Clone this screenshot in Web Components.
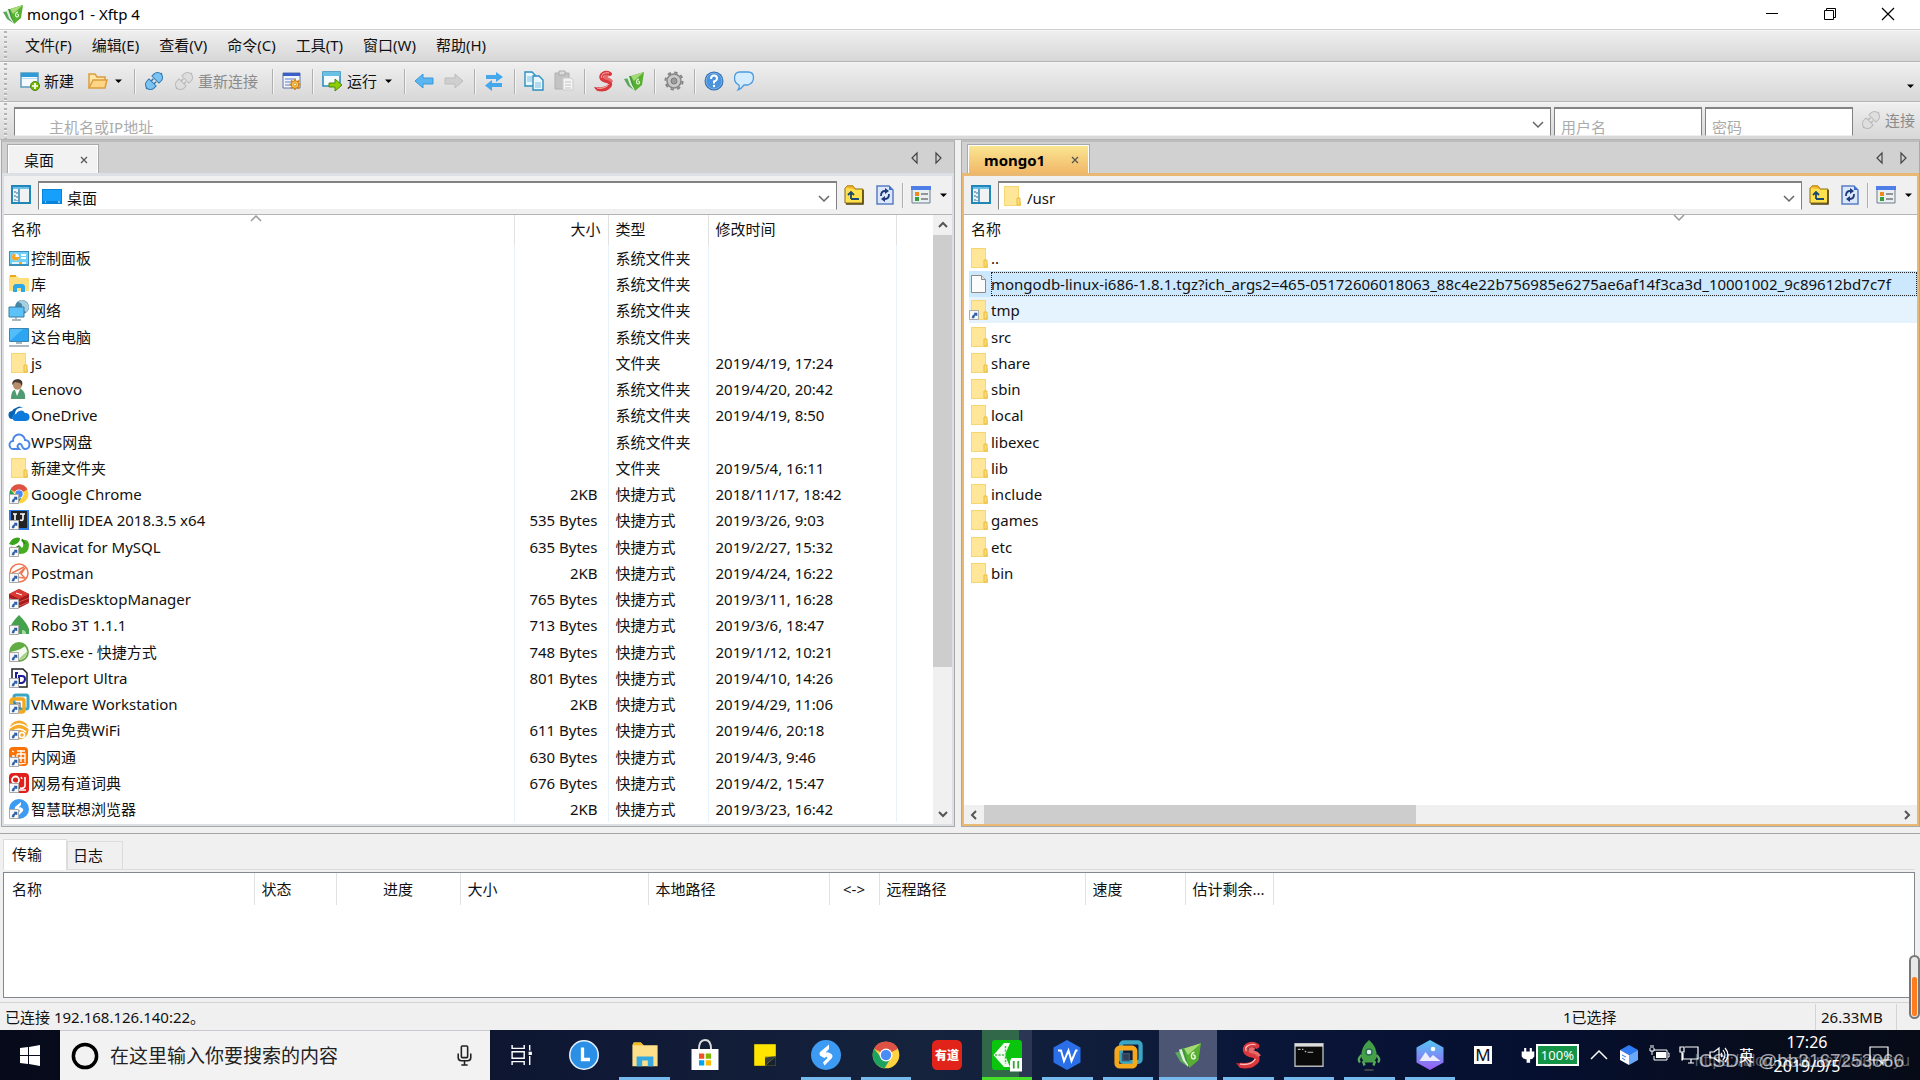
<!DOCTYPE html>
<html lang="zh-CN">
<head>
<meta charset="utf-8">
<title>mongo1 - Xftp 4</title>
<style>
html, body { margin: 0; height: 100%; }
body { font: 15px/20px "Noto Sans", "Noto Sans CJK SC", sans-serif; color: #111; background: #f0f0f0; overflow: hidden; }
</style>
</head>
<body>
<xftp-app></xftp-app>
<script>
const folder = '<path d="M2 0h15v15l2 1v4H2z" fill="#f7d672"/><path d="M3 1h13v18H3z" fill="#ffe698"/><path d="M15 12h3v7h-3z" fill="#ffdc70" stroke="#e6bd42"/>';
const plug = (a, b) => `<g transform="rotate(-45 10 10)"><path d="M-1 10h3M18 10h3" stroke="${b}" stroke-width="2"/><path d="M8 5H5a5 5 0 0 0 0 10h3zM12 5h3a5 5 0 0 1 0 10h-3z" fill="${a}" stroke="${b}"/><path d="M8 8h3M8 12h3" stroke="${b}" stroke-width="1.5"/></g>`;
const xftp = '<path d="M0 8l4 7 6 4-4-12z" fill="#5aa85e"/><path d="M3 6l3 8 4 5 1-3-4-11z" fill="#dff0da"/><path d="M5 5l3 9 3 5 2-2-5-12z" fill="#3f9440"/><path d="M7 5l13-4-2 13-7 6-2-7z" fill="#58b031"/><path d="M7 5l13-4-10 9z" fill="#a6d977"/><path d="M15 8c-3 0-3 5-1 5s2-3 0-3" fill="none" stroke="#e9ffe0" stroke-width="1.100"/>';
const xshell = '<path d="M0 16c7 2 12 1 13-2 3 3 2 5-2 6-5 1-9 0-11-4z" fill="#c7262c"/><path d="M16 3C11 0 5 4 8 8c2 3 7 1 8 4 1 4-5 7-12 6" fill="none" stroke="#d9383d" stroke-width="4" stroke-linecap="round"/><path d="M14 6c-2-2-4 0-3 1s5 0 7 4" fill="none" stroke="#e8696a" stroke-width="2.500"/><path d="M15 2C10 1 6 4 8 7M3 17c6 1 10-1 12-4" fill="none" stroke="#ffb8b4"/>';
const chrome = '<circle cx="10" cy="10" r="9.5" fill="#ffd242"/><path d="M10 10L1.5 5.5A9.6 9.6 0 0 1 18.5 5.5z" fill="#de5145"/><path d="M1.5 5.5A9.6 9.6 0 0 0 9 19.5L13.5 12 10 10 6 11z" fill="#1da260"/><circle cx="10" cy="10" r="4.6" fill="#fff"/><circle cx="10" cy="10" r="3.7" fill="#4a8bf5"/>';
const vmware = '<rect x="5" y="1" width="14" height="14" rx="2" fill="none" stroke="#3aa6c4" stroke-width="3"/><rect x="2" y="5" width="13" height="13" rx="2" fill="none" stroke="#f5a81c" stroke-width="3.4"/><rect x="6" y="9" width="5" height="5" fill="#fff" fill-opacity=".15" stroke="#37556b"/>';
const bird = '<circle cx="10" cy="10" r="10" fill="#3e9bf4"/><path d="M12 3L6 8q-1 2 1 3l2 1 3-2-2-2 2-2zM9 17l5-5q1-2-1-3l-2-1-1 2 1 2-3 3z" fill="#fff"/>';
const ICONS = {
 xftp, xshell, chrome, vmware, bird, folder,
 newwin: '<path d="M1 2h17v14H1z" fill="#f4fafd" stroke="#5a9dbd" stroke-width="1.5"/><path d="M1 2h17v4H1z" fill="#2e9bd6"/><path d="M2 7h15v1H2z" fill="#bcdff0"/><circle cx="15" cy="15" r="4.5" fill="#7ab800" stroke="#4d8a08"/><path d="M15 12v6M12 15h6" stroke="#fff" stroke-width="1.7"/>',
 open: '<path d="M1 17V3h6l2 3h8v3" fill="#ffe7a5" stroke="#dc9d3f" stroke-width="1.5"/><path d="M1 17l4-8h14l-2 8z" fill="#ffd482" stroke="#dc9d3f" stroke-width="1.5"/>',
 plug: plug('#7cc3f2', '#2f79b5'), plugoff: plug('#dedede', '#b9b9b9'),
 props: '<path d="M1 2h17v15H1z" fill="#f3f5fb" stroke="#5a74a8"/><path d="M1 2h17v3H1z" fill="#3a5fc8"/><path d="M3 8h11M3 11h7M3 14h6" stroke="#5b7fd0"/><path d="M13 8v11M7.500 13.500h11M9 9.500l8 8M17 9.500l-8 8" stroke="#d58b1b" stroke-width="1.800"/><circle cx="13" cy="13.500" r="3.800" fill="#ffc24e" stroke="#c77d12"/><circle cx="13" cy="13.500" r="1.400" fill="#fff" stroke="#c77d12" stroke-width=".8"/>',
 run: '<path d="M1 1h17v14H1z" fill="#f4fafd" stroke="#2f8fbd" stroke-width="1.6"/><path d="M1 1h17v4H1z" fill="#69bfe4"/><path d="M7 12h6V8l7 6-7 6v-4H7z" fill="#8fce00" stroke="#4d8a08"/>',
 left: '<path d="M1 10l8-7v4h10v6H9v4z" fill="#5bb5f0" stroke="#3b98dc"/>',
 right: '<path d="M19 10l-8-7v4H1v6h10v4z" fill="#cfcfcf" stroke="#bdbdbd"/>',
 sync: '<path d="M2 4h10V1l7 5-7 5V8H2zM18 12H8V9l-7 5.500L8 20v-4h10z" fill="#45a8ec"/>',
 copy: '<path d="M1 1h7l3 3v11H1z" fill="#eaf7fd" stroke="#2b8fbf" stroke-width="1.4"/><path d="M9 5h6l4 4v10H9z" fill="#eaf7fd" stroke="#2b8fbf" stroke-width="1.4"/><path d="M3 6h5M3 8h5M3 10h5M11 12h6M11 14h6M11 16h6" stroke="#7bbfe0"/>',
 paste: '<path d="M1 2h14v16H1z" fill="#c3c3c3" stroke="#b0b0b0"/><path d="M5 0h6v4H5z" fill="#dcdcdc" stroke="#aaa"/><path d="M9 7h8l2 2v10H9z" fill="#f4f4f4" stroke="#ccc"/><path d="M11 11h6M11 14h6M11 17h6" stroke="#c4c4c4"/>',
 gear: '<circle cx="10" cy="10" r="7" fill="#c9c9c9" stroke="#858585" stroke-width="1.5"/><circle cx="10" cy="10" r="8.600" fill="none" stroke="#858585" stroke-width="2" stroke-dasharray="3.400 3.350"/><circle cx="10" cy="10" r="3" fill="#9b9b9b" stroke="#7c7c7c"/>',
 help: '<circle cx="10" cy="10" r="9.500" fill="#2f6fb8"/><circle cx="10" cy="10" r="8" fill="#4b93da" stroke="#a9cdf0" stroke-width=".6"/><path d="M7 8q0-3.500 3-3.500T13 7.500q0 2-3 3v2" fill="none" stroke="#fff" stroke-width="2"/><circle cx="10" cy="15" r="1.200" fill="#fff"/>',
 chat: '<path d="M6 1h8q5.500 0 5.500 5.500T14 14h-4q-3 4-6 5 2-3 1-5Q.500 12 .500 7 .500 1 6 1z" fill="#d4ecff" stroke="#4b9ade" stroke-width="1.300"/>',
 side: '<path d="M1 1h18v17H1z" fill="#f2f2f2" stroke="#2187b9" stroke-width="2"/><path d="M2 2h16v2H2z" fill="#6cc0ea"/><path d="M8 4v14" stroke="#2187b9" stroke-width="1.500"/><path d="M4 6v11M6 7v9" stroke="#346e9c" stroke-dasharray="2 2"/>',
 desktop: '<path d="M0 3h20v15H0z" fill="#0a84d8"/><path d="M1 4h18v11H1z" fill="#17a0fb"/><path d="M3 16h1M16 16h2" stroke="#fff"/>',
 up: '<path d="M1 18V3l2-2h6l2 3h8v14z" fill="#ffe04f" stroke="#8a6c11"/><path d="M1 3l2-2h6l2 3" fill="#f3b92c" stroke="#c98a14"/><path d="M19 5v14H2" fill="none" stroke="#4f420b" stroke-width="1.500"/><path d="M7 14V8M4 10l3-3 3 3M7 14h8" fill="none" stroke="#1a4970" stroke-width="1.800"/>',
 refresh: '<path d="M2 1h12l4 4v14H2z" fill="#dbe8fb" stroke="#5b7cc2" stroke-width="1.500"/><path d="M14 1v4h4" fill="#3a70d8"/><path d="M6 11q0-5 4-5M14 9q0 5-4 5" fill="none" stroke="#1e3a7a" stroke-width="1.800"/><path d="M10 3l4 3-4 3zM10 11l-4 3 4 3z" fill="#1e3a7a"/>',
 view: '<path d="M1 2h18v16H1z" fill="#e8eef2" stroke="#6d7f8c"/><path d="M0 1h20v4H0z" fill="#4f7fe6"/><path d="M4 7h4v4H4z" fill="#f08a1d"/><path d="M4 12h4v4H4z" fill="#35a03b"/><path d="M10 9h7M10 14h7" stroke="#777" stroke-width="1.500"/>',
 cpanel: '<path d="M0 3h20v15H0z" fill="#3b8fb9"/><path d="M1 4h18v12H1z" fill="#6fd0fb"/><circle cx="6.500" cy="9" r="3.600" fill="#fff"/><path d="M6.500 9V5.400a3.600 3.600 0 1 0 3.600 3.600z" fill="#f5a623"/><path d="M12 6h5v2h-5zM12 9h5v2h-5z" fill="#fff"/><path d="M3 15h7M13 15h4" stroke="#fff" stroke-width="1.500"/><path d="M10 15h3" stroke="#f5a623" stroke-width="2"/>',
 lib: '<path d="M0 2h8l2 2h10v13H0z" fill="#ffdf7d"/><path d="M1 2h6" stroke="#e8a91d" stroke-width="2"/><path d="M4 18v-6l2-2h8l2 2v6h-4v-4H8v4z" fill="#2ea7e6"/>',
 net: '<circle cx="13" cy="7" r="7" fill="#4486a8"/><path d="M9 2q5 1 4 5t5 5l2-5q-1-6-8-7z" fill="#a8cfe0"/><path d="M0 7h15v10H0z" fill="#5bc3fa" stroke="#3a7d9f"/><path d="M7 17v2M3 20h9" stroke="#8ba0ac" stroke-width="1.500"/>',
 pc: '<path d="M.500 1.500h19v13h-19z" fill="#52bdfb" stroke="#3a86b0"/><path d="M1 14L14 2h5v12z" fill="#2ea5f0"/><path d="M7 16h6" stroke="#a9b9c4" stroke-width="2"/><path d="M0 19h20" stroke="#8fa2b0" stroke-width="1.500"/>',
 user: '<path d="M2 20q0-7 3-9l7-1q5 3 4 10z" fill="#4f9c73"/><path d="M6 11l2 6 3-7z" fill="#fff"/><circle cx="8.500" cy="6" r="4.600" fill="#b98c6a"/><path d="M3 6q0-6 6-6 6 1 4 7l-2-3-5-1z" fill="#463a33"/>',
 onedrive: '<path d="M4 14a4 4 0 0 1-1-8 5 5 0 0 1 4-3q3-3 7 0a6 6 0 0 0-8 6q-3 1-2 5z" fill="#0763b5"/><path d="M7 16a3.500 3.500 0 0 1 0-7 5 5 0 0 1 9-1 4 4 0 0 1 1 8z" fill="#0d7bdc"/>',
 wps: '<path d="M5 17a4 4 0 0 1-1-8 6 6 0 0 1 12-1 4.500 4.500 0 0 1 0 9q-2 0-3-3-1-3-3-2-3 2 0 5z" fill="none" stroke="#4a86e8" stroke-width="2"/>',
 idea: '<path d="M0 0h20v20H0z" fill="#2d7be5"/><path d="M2 1h16v17H2z" fill="#222"/><path d="M4 4h4M6 4v6M11 4h5M14 4v5q0 2-3 1" stroke="#fff" stroke-width="1.600" fill="none"/>',
 navicat: '<path d="M0 7q4-8 11-6 0 4-4 6-3 2-7 0z" fill="#3aa51c"/><path d="M12 3q8-1 8 5 0 9-9 9l-6-3q1-4 5-6l3 3q2-2 1-5z" fill="#45ad22"/><path d="M13 2l3 5M2 10q4 2 8-1" stroke="#2c7d18" stroke-width="1.300" fill="none"/>',
 postman: '<circle cx="10" cy="10" r="9" fill="#fff" stroke="#ee7650" stroke-width="1.500"/><path d="M3 10L15 4M6 14L16 5l-4 6 4 4z" fill="none" stroke="#ee7650" stroke-width="1.500"/>',
 redis: '<path d="M0 5l10-5 10 5v9l-10 5-10-5z" fill="#a51c1c"/><path d="M0 5l10-5 10 5-10 5z" fill="#db3a34"/><path d="M0 9l10 4 10-4M0 13l10 4 10-4" stroke="#e0554f" fill="none"/><path d="M7 4l6 2" stroke="#fff"/>',
 robo: '<path d="M10 0q8 8 10 14v5H0v-5q3-7 10-14z" fill="#45a24c"/><path d="M13 19v-4q4 0 4 4" fill="#a8dba8"/>',
 sts: '<circle cx="10" cy="10" r="9" fill="#f6fbf2" stroke="#68a744" stroke-width="1.800"/><path d="M1 10Q2 2 9 1q6 0 8 2-4 5-16 7z" fill="#62ad43"/><path d="M19 9q-3 9-10 9 4-5 10-9z" fill="#a8d08d"/>',
 teleport: '<path d="M3 1h11l4 4v14H3z" fill="#fff" stroke="#222" stroke-width="1.500"/><path d="M6 5h3M7 4v8M10 8h3q3 0 3 3t-3 4h-3z" stroke="#1f1f9a" stroke-width="2" fill="none"/>',
 wifi: '<circle cx="10" cy="10" r="9.500" fill="#f7a928"/><path d="M1 8q9-8 18 0M3 12q7-6 14 0" fill="none" stroke="#fff" stroke-width="1.500"/><circle cx="13" cy="15" r="2.500" fill="none" stroke="#fff" stroke-width="1.500"/>',
 tong: '<rect width="19" height="19" rx="4" fill="#fb7204"/><path d="M3 4l2 1M3 9h2v5M8 4h8M12 3v12M8 7h8v8M8 7v8M8 11h8M4 15q6 3 13 1" fill="none" stroke="#fff" stroke-width="1.300"/>',
 youdao: '<rect width="20" height="20" rx="4" fill="#e0201b"/><circle cx="6.500" cy="7" r="3.500" fill="none" stroke="#fff" stroke-width="1.800"/><path d="M12 4l1 2M16 4v9q-1 3-5 2M7 17h10" stroke="#fff" stroke-width="1.600" fill="none"/>',
 file: '<path d="M2.500 1.500h10l4 4v13h-14z" fill="#fbfbfb" stroke="#8b8b8b"/><path d="M12.500 1.500v4h4" fill="#e6e6e6" stroke="#8b8b8b"/>',
 win: '<path d="M0 3l8-1v8H0zM9 2l11-2v10H9zM0 11h8v8l-8-1zM9 11h11v10L9 19z" fill="#fff"/>',
 cortana: '<circle cx="10" cy="10" r="8.300" fill="none" stroke="#000" stroke-width="2.500"/>',
 mic: '<rect x="7" y="1" width="6" height="11" rx="1" fill="none" stroke="#222" stroke-width="1.500"/><path d="M4 8v4q0 3 3 3h6q3 0 3-3V8M10 15v4M7 19h6" fill="none" stroke="#222" stroke-width="1.500"/>',
 tasks: '<path d="M1 1v3h11V1M1 19v-3h11v3M1 7h11v6H1zM17 1v5M17 11v8" fill="none" stroke="#fff" stroke-width="1.300"/><path d="M16 7h3v3h-3z" fill="#fff"/>',
 clock: '<circle cx="10" cy="10" r="9.500" fill="#2b8fe6" stroke="#e6f2fd"/><path d="M9 5v8h5" fill="none" stroke="#fff" stroke-width="2.200"/>',
 explorer: '<path d="M1 3l1-2h5l2 2h10v15H1z" fill="#ffe08a"/><path d="M1 3l1-2h5l2 2" fill="#f5b91f"/><path d="M4 18v-7h12v7h-4v-4H8v4z" fill="#36a9e1"/>',
 store: '<path d="M1 6h18v14H1z" fill="#fff"/><path d="M6 6q0-6 4-6t4 6" fill="none" stroke="#ddd" stroke-width="1.300"/><path d="M6 9h3.500v3.500H6z" fill="#f25022"/><path d="M10.500 9H14v3.500h-3.500z" fill="#7fba00"/><path d="M6 13.500h3.500V17H6z" fill="#00a4ef"/><path d="M10.500 13.500H14V17h-3.500z" fill="#ffb900"/>',
 note: '<path d="M1 1h18v18H1z" fill="#ffe400"/><path d="M10 19v-8h9v8z" fill="#17222f"/><path d="M10 19v-8h9z" fill="#2d333a"/><path d="M10 11h9l-9 8z" fill="#ffe400"/><path d="M10 19v-7l9-1z" fill="#333a40"/>',
 youdao2: '<rect width="20" height="20" rx="3.500" fill="#e2231a"/><text x="10" y="13" text-anchor="middle" font-size="8" font-weight="900" font-family="Noto Sans CJK SC" fill="#fff">有道</text>',
 green: '<rect width="20" height="20" rx="2" fill="#0ac40e"/><path d="M1 10l7-8h4L9 9v2l3 7H8z" fill="#f2fff0"/><path d="M2 10h7M9 4v5M9 11v5" stroke="#58b858" stroke-dasharray="1.500 .8"/><path d="M12 14l1-2h7v9h-8z" fill="#fff"/><path d="M14.500 14v5M17.500 14v5" stroke="#3aa33a" stroke-width="1.200"/>',
 wpsw: '<path d="M10 0l9 5v10l-9 5-9-5V5z" fill="#2a6fe8"/><path d="M4 7h2l2 7 3-7 2 7 3-7h1" fill="none" stroke="#fff" stroke-width="1.300"/>',
 cmd: '<path d="M0 2h20v16H0z" fill="#0a0a0a" stroke="#b7b7b7"/><path d="M0 2h20v2H0z" fill="#ddd"/><path d="M2 6h2M5 6h1M7 7l1 1M9 8h4" stroke="#bbb" stroke-width=".8"/>',
 rocket: '<path d="M10 0q6 5 5 12l-2 3H7l-2-3Q4 5 10 0z" fill="#43a047"/><circle cx="10" cy="8" r="2" fill="#dff0f0" stroke="#2c6e55"/><path d="M5 10q-3 3-1 5M15 10q3 3 1 5M6 14l1 3M14 14l-1 3" stroke="#57a85b" stroke-width="1.600" fill="none"/><path d="M7 20h6" stroke="#555"/>',
 photo: '<defs><linearGradient id="g" x2="0" y2="1"><stop stop-color="#55c6f5"/><stop offset="1" stop-color="#9a5cf3"/></linearGradient></defs><path d="M10 0l9 5v10l-9 5-9-5V5z" fill="url(#g)"/><path d="M3 14l4-6 3 4 2-2 5 4z" fill="#fff" fill-opacity=".85"/><circle cx="12" cy="6" r="1.500" fill="#fff"/>',
 chevup: '<path d="M2 14l8-8 8 8" fill="none" stroke="#fff" stroke-width="1.500"/>',
 cube: '<path d="M10 0l9 5-9 5-9-5z" fill="#2f7cf6"/><path d="M1 5l9 5v10l-9-5z" fill="#fff"/><path d="M19 5l-9 5v10l9-5z" fill="#6aa8ff"/><path d="M3 10l4 2M3 13l3 2" stroke="#2f7cf6"/>',
 battery: '<path d="M7 7h10v6H7z" fill="#fff"/><path d="M5 5h13v10H5v-4M19 8h1v4h-1M1 3v3h4V3M2 0v3M4 0v3M3 6v4" fill="none" stroke="#fff"/>',
 monitor: '<path d="M6 2h13v12H4V8M9 18h6M12 14v4M1 2h4v5H1zM3 7v8h1" fill="none" stroke="#fff" stroke-width="1.200"/>',
 speaker: '<path d="M1 7h4l5-4v14l-5-4H1zM12 8q2 2 0 4M14 5q4 5 0 10M16 3q6 7 0 14" fill="none" stroke="#fff" stroke-width="1.200"/>',
 action: '<path d="M1 2h18v13h-5v4l-4-4H1z" fill="none" stroke="#fff" stroke-width="1.200"/>',
 plugw: '<path d="M6 0v6M14 0v6" stroke="#fff" stroke-width="3"/><path d="M1 5h18v7q-2 4-6 4v5H8v-5q-5 0-7-4z" fill="#fff"/>',
 min: '<path d="M4 9.500h12" stroke="#000"/>',
 restore: '<path d="M4.500 6.500h9v9h-9zM6.500 6V4.500h9v9H14" fill="none" stroke="#000"/>',
 close: '<path d="M4 4l12 12M16 4L4 16" stroke="#000" stroke-width="1.200"/>',
 x: '<path d="M7 7l6 6M13 7l-6 6" stroke="#555" stroke-width="1.200"/>',
 down: '<path d="M7 8.500h7L10.500 12z" fill="#000"/>',
 chevdown: '<path d="M5 8l5 5 5-5" fill="none" stroke="#666" stroke-width="1.500"/>',
 prev: '<path d="M13 5v10L8 10z" fill="none" stroke="#444" stroke-width="1.200"/>',
 next: '<path d="M7 5v10l5-5z" fill="none" stroke="#444" stroke-width="1.200"/>',
 sup: '<path d="M6 12l4-4 4 4" fill="none" stroke="#555" stroke-width="2"/>',
 sdown: '<path d="M6 8l4 4 4-4" fill="none" stroke="#555" stroke-width="2"/>',
 sleft: '<path d="M12 6l-4 4 4 4" fill="none" stroke="#555" stroke-width="2"/>',
 sright: '<path d="M8 6l4 4-4 4" fill="none" stroke="#555" stroke-width="2"/>',
 asc: '<path d="M5 14l5-5 5 5" fill="none" stroke="#999" stroke-width="1.500"/>',
 desc: '<path d="M5 8l5 5 5-5" fill="none" stroke="#999" stroke-width="1.500"/>'
};
const BADGE = '<path d="M.500 10.500h9v9h-9z" fill="#f7f7f7" stroke="#a9a9a9"/><path d="M3 18q0-3 3-4l-1-1h3v3l-1-1q-2 1-2 3z" fill="#2b5fa8" stroke="#2b5fa8" stroke-width=".5"/>';

const BASE = `<style>
:host { display: block; box-sizing: border-box; }
*, *::before, *::after { box-sizing: border-box; }
button, input { font: inherit; color: inherit; background: none; border: 0; padding: 0; margin: 0; outline: 0; border-radius: 0; min-width: 0; }
button { display: flex; align-items: center; justify-content: center; white-space: nowrap; }
</style>`;
function define(tag, html) {
  customElements.define(tag, class extends HTMLElement {
    connectedCallback() {
      if (this.shadowRoot) return;
      const t = document.createElement('template');
      t.innerHTML = BASE + (typeof html === 'function' ? html(this) : html);
      this.attachShadow({ mode: 'open' }).append(t.content.cloneNode(true));
    }
  });
}
const icon = (n, s, l) => `<ui-icon name="${n}" size="${s || 20}"${l ? ' link' : ''}></ui-icon>`;

define('ui-icon', el => {
  const s = el.getAttribute('size') || 20;
  return `<style>:host { display: block; flex: none; width: ${s}px; height: ${s}px; } svg { display: block; overflow: visible; }</style>
  <svg width="${s}" height="${s}" viewBox="0 0 20 20" aria-hidden="true">${ICONS[el.getAttribute('name')]}${el.hasAttribute('link') ? BADGE : ''}</svg>`;
});

define('title-bar', `<style>
:host { display: flex; align-items: center; height: 29px; background: #fff; color: #000; padding: 0 3px 2px; font-size: 15px; }
h1 { flex: 1; margin: 0; padding-left: 4px; font: inherit; }
button { width: 58px; height: 27px; }
</style>${icon('xftp')}<h1>mongo1 - Xftp 4</h1>
<button aria-label="最小化">${icon('min')}</button><button aria-label="还原">${icon('restore')}</button><button aria-label="关闭">${icon('close')}</button>`);

define('bar-strip', `<style>
:host { display: flex; align-items: center; border-bottom: 1px solid #b4b4b4; border-top: 1px solid #f6f6f6; background: linear-gradient(#efefef, #d7d7d7); padding-left: 4px; }
.grip { width: 4px; align-self: stretch; flex: none; background: repeating-linear-gradient(#b4b4b4 0 2px, #f4f4f4 2px 3px, transparent 3px 5px) left / 3px 100% no-repeat; }
</style><span class="grip"></span><slot></slot>`);

define('menu-bar', `<style>
:host { border-top: 1px solid #cfcfcf; } bar-strip { height: 32px; } nav { display: flex; padding: 0 0 3px 7px; } button { padding: 0 10px; height: 27px; }
</style><bar-strip><nav>${['文件(F)','编辑(E)','查看(V)','命令(C)','工具(T)','窗口(W)','帮助(H)'].map(t => `<button>${t}</button>`).join('')}</nav></bar-strip>`);

define('tool-button', el => `<style>
:host { flex: none; } button { min-width: 30px; height: 30px; padding: 0 5px; } :host([off]) { color: #8b8b8b; }
.t { margin-left: 4px; margin-right: var(--end, 4px); } :host([menu]) .t { margin: 0 1px 0 5px; } :host([menu]) button { padding-right: 1px; }
</style><button aria-label="${el.getAttribute('label') || el.textContent}">${icon(el.getAttribute('icon'))}${el.textContent ? '<span class="t"><slot></slot></span>' : ''}${el.hasAttribute('menu') ? icon('down') : ''}</button>`);
define('tool-sep', `<style>:host { width: 1px; height: 25px; margin: 0 4px 0 5px; background: #b0b0b0; box-shadow: 1px 0 #f5f5f5; flex: none; }</style>`);

define('tool-bar', `<style>
bar-strip { height: 40px; } .row { display: flex; align-items: center; flex: 1; padding: 0 0 2px 7px; } .end { margin-left: auto; align-self: flex-end; }
</style><bar-strip><div class="row">
<tool-button icon="newwin">新建</tool-button><tool-button icon="open" menu label="打开"></tool-button><tool-sep></tool-sep>
<tool-button icon="plug" label="连接"></tool-button><tool-button icon="plugoff" off>重新连接</tool-button><tool-sep></tool-sep>
<tool-button icon="props" label="属性"></tool-button><tool-sep></tool-sep>
<tool-button icon="run" menu>运行</tool-button><tool-sep></tool-sep>
<tool-button icon="left" label="后退"></tool-button><tool-button icon="right" label="前进"></tool-button><tool-sep></tool-sep>
<tool-button icon="sync" label="同步"></tool-button><tool-sep></tool-sep>
<tool-button icon="copy" label="复制"></tool-button><tool-button icon="paste" label="粘贴"></tool-button><tool-sep></tool-sep>
<tool-button icon="xshell" label="Xshell"></tool-button><tool-button icon="xftp" label="Xftp"></tool-button><tool-sep></tool-sep>
<tool-button icon="gear" label="选项"></tool-button><tool-sep></tool-sep>
<tool-button icon="help" label="帮助"></tool-button><tool-button icon="chat" label="反馈"></tool-button>
<span class="end">${icon('down')}</span></div></bar-strip>`);

define('connect-bar', `<style>
bar-strip { height: 38px; } .row { display: flex; flex: 1; gap: 3px; align-items: flex-start; align-self: stretch; padding: 4px 0 0 6px; }
.box { display: flex; height: 29px; background: #fff; border: 1px solid #828282; border-top-width: 2px; border-bottom: 1px solid #eee; }
.host { flex: 1; padding-left: 34px; } .cred { width: 148px; padding-left: 6px; }
input { flex: 1; width: 0; padding-top: 9px; } input::placeholder { color: #ababab; opacity: 1; } .box button { width: 24px; padding-top: 4px; }
tool-button { --end: 0px; margin-top: -2px; }
</style><bar-strip><div class="row">
<div class="box host"><input aria-label="主机名或IP地址" placeholder="主机名或IP地址"><button aria-label="历史">${icon('chevdown')}</button></div>
<div class="box cred"><input aria-label="用户名" placeholder="用户名"></div>
<div class="box cred"><input type="password" aria-label="密码" placeholder="密码"></div>
<tool-button icon="plugoff" off>连接</tool-button></div></bar-strip>`);

define('path-bar', el => `<style>
:host { display: flex; align-items: center; height: 39px; padding: 0 2px 0 7px; background: #f0f0f0; border-bottom: 1px solid #b5b5b5; }
.box { flex: 1; display: flex; align-items: center; height: 29px; margin: 0 1px 0 7px; background: #fff; border: 1px solid #828282; border-top-width: 2px; border-bottom-color: #eee; padding-left: 3px; gap: 5px; }
input { flex: 1; padding-top: 4px; } .box button { width: 24px; padding-top: 4px; } .t { width: 31px; } .arrow { width: 14px; }
tool-sep { margin: 0 2px; }
</style>${icon('side')}<div class="box">${icon(el.getAttribute('icon'))}<input aria-label="路径" value="${el.getAttribute('value')}"><button aria-label="展开">${icon('chevdown')}</button></div>
<button class="t" aria-label="上级目录">${icon('up')}</button><button class="t" aria-label="刷新">${icon('refresh')}</button><tool-sep></tool-sep><button class="t" aria-label="视图">${icon('view')}</button><button class="arrow" aria-label="视图选项">${icon('down')}</button>`);

define('file-pane', el => `<style>
:host { display: flex; flex-direction: column; min-width: 0; border: 1px solid #a9a9a9; border-top: 2px solid #bdbdbd; background: #d1d1d1; --edge: #dcdfe4; --tab: #f2f2f2; }
:host([active]) { --edge: #e9b973; --tab: linear-gradient(#fbe793, #f0b868); }
.strip { display: flex; height: 31px; padding: 2px 3px 0 5px; }
.tab { display: flex; align-items: center; height: 29px; padding-left: 16px; background: var(--tab); border: 1px solid #a9a9a9; border-bottom: 0; box-shadow: inset 1px 1px #fff, inset -1px 0 #fff; }
.tab .name { padding-top: 2px; } .tab .x { width: 29px; margin-left: 15px; height: 28px; padding-top: 2px; }
:host([active]) .name { font-weight: 700; color: #000; }
.nav { margin-left: auto; display: flex; } .nav button { width: 25px; height: 27px; }
.body { flex: 1; min-height: 0; display: flex; flex-direction: column; border: 2px solid var(--edge); border-top-width: 3px; background: #fff; }
slot { display: contents; }
</style><div class="strip" role="tablist"><div class="tab"><button class="name" role="tab">${el.getAttribute('label')}</button><button class="x" aria-label="关闭标签">${icon('x')}</button></div>
<div class="nav"><button aria-label="上一个">${icon('prev')}</button><button aria-label="下一个">${icon('next')}</button></div></div>
<div class="body"><slot></slot></div>`);

const S = '系统文件夹', F = '文件夹', K = '快捷方式';
const LOCAL = [
 ['cpanel','控制面板','',S,''],['lib','库','',S,''],['net','网络','',S,''],['pc','这台电脑','',S,''],['folder','js','',F,'2019/4/19, 17:24'],
 ['user','Lenovo','',S,'2019/4/20, 20:42'],['onedrive','OneDrive','',S,'2019/4/19, 8:50'],['wps','WPS网盘','',S,''],['folder','新建文件夹','',F,'2019/5/4, 16:11'],
 ['chrome','Google Chrome','2KB',K,'2018/11/17, 18:42',1],['idea','IntelliJ IDEA 2018.3.5 x64','535 Bytes',K,'2019/3/26, 9:03',1],['navicat','Navicat for MySQL','635 Bytes',K,'2019/2/27, 15:32',1],
 ['postman','Postman','2KB',K,'2019/4/24, 16:22',1],['redis','RedisDesktopManager','765 Bytes',K,'2019/3/11, 16:28',1],['robo','Robo 3T 1.1.1','713 Bytes',K,'2019/3/6, 18:47',1],
 ['sts','STS.exe - 快捷方式','748 Bytes',K,'2019/1/12, 10:21',1],['teleport','Teleport Ultra','801 Bytes',K,'2019/4/10, 14:26',1],['vmware','VMware Workstation','2KB',K,'2019/4/29, 11:06',1],
 ['wifi','开启免费WiFi','611 Bytes',K,'2019/4/6, 20:18',1],['tong','内网通','630 Bytes',K,'2019/4/3, 9:46',1],['youdao','网易有道词典','676 Bytes',K,'2019/4/2, 15:47',1],['bird','智慧联想浏览器','2KB',K,'2019/3/23, 16:42',1]];
const REMOTE = [['folder','..'],['file','mongodb-linux-i686-1.8.1.tgz?ich_args2=465-05172606018063_88c4e22b756985e6275ae6af14f3ca3d_10001002_9c89612bd7c7f'],['folder','tmp',1],
 ...['src','share','sbin','local','libexec','lib','include','games','etc','bin'].map(n => ['folder', n])];
const TABLE = `
table { width: 100%; border-collapse: collapse; table-layout: fixed; }
th { height: 30px; padding: 0 7px 2px; text-align: left; font-weight: 400; border-right: 1px solid #e2e2e2; }
td { height: 26px; padding: 0 7px; white-space: nowrap; overflow: hidden; border-right: 1px solid #e8f2fb; }
tr:nth-child(4n) td { height: 27px; }
th:last-child, td:last-child { border-right: 0; }
.n { padding: 0 0 0 5px; } .cell { display: flex; align-items: center; gap: 2px; height: 26px; }
.sort { position: absolute; top: -8px; }`;

define('local-list', `<style>${TABLE}
:host { display: flex; flex: 1; min-height: 0; } .view { flex: 1; overflow: hidden; position: relative; }
.r { text-align: right; } td.r { padding-right: 10px; } .sort { left: 26%; }
.name { width: auto; } .size { width: 94px; } .type { width: 100px; } .time { width: 188px; } .rest { width: 37px; }
.bar { width: 19px; flex: none; background: #f0f0f0; display: flex; flex-direction: column; }
.thumb { flex: 437; background: #cdcdcd; } .gap { flex: 139; }
</style><div class="view"><div class="sort">${icon('asc')}</div><table><colgroup><col class="name"><col class="size"><col class="type"><col class="time"><col class="rest"></colgroup>
<thead><tr><th>名称</th><th class="r">大小</th><th>类型</th><th>修改时间</th><th></th></tr></thead>
<tbody>${LOCAL.map(r => `<tr><td class="n"><div class="cell">${icon(r[0], 20, r[5])}<span>${r[1]}</span></div></td><td class="r">${r[2]}</td><td>${r[3]}</td><td>${r[4]}</td><td></td></tr>`).join('')}</tbody></table></div>
<div class="bar">${icon('sup')}<div class="thumb"></div><div class="gap"></div>${icon('sdown')}</div>`);

define('remote-list', `<style>${TABLE}
:host { display: flex; flex-direction: column; flex: 1; min-height: 0; } .view { flex: 1; overflow: hidden; position: relative; }
td, th { border: 0; } .sort { left: 74%; } .sel .cell { background: #cce8ff; } .hot .cell { background: #e5f3ff; }
.sel span { flex: 1 0 auto; outline: 1px dotted #222; outline-offset: -1px; height: 24px; line-height: 24px; }
.bar { height: 19px; flex: none; background: #f0f0f0; display: flex; align-items: stretch; }
.thumb { flex: 432; background: #cdcdcd; } .gap { flex: 480; }
</style><div class="view"><div class="sort">${icon('desc')}</div><table><thead><tr><th>名称</th></tr></thead>
<tbody>${REMOTE.map((r, i) => `<tr class="${i === 1 ? 'sel' : i === 2 ? 'hot' : ''}"><td class="n"><div class="cell">${icon(r[0], 20, r[2])}<span>${r[1]}</span></div></td></tr>`).join('')}</tbody></table></div>
<div class="bar">${icon('sleft')}<div class="thumb"></div><div class="gap"></div>${icon('sright')}</div>`);

const COLS = [['名称',250],['状态',82],['进度',124,1],['大小',188],['本地路径',181],['<->',50,1],['远程路径',206],['速度',100],['估计剩余...',88]];
define('transfer-panel', `<style>
:host { display: flex; flex-direction: column; height: 169px; border-top: 1px solid #a5a5a5; background: #f0f0f0; padding: 4px 5px 4px 3px; }
.tabs { display: flex; align-items: flex-end; height: 32px; border-bottom: 1px solid #dcdcdc; }
.tabs button { height: 28px; padding: 0 19px 2px 5px; border: 1px solid #dcdcdc; border-bottom: 0; }
.tabs .on { height: 31px; padding: 0 24px 3px 8px; background: #fff; margin-bottom: -1px; align-self: flex-end; }
.box { flex: 1; margin-top: 2px; background: #fff; border: 1px solid #828790; }
table { border-collapse: collapse; table-layout: fixed; width: 1269px; } th { height: 32px; padding: 0 7px 1px; border-right: 1px solid #e2e2e2; text-align: left; font-weight: 400; white-space: nowrap; } .c { text-align: center; }
th:first-child { padding-left: 8px; }
</style><div class="tabs" role="tablist"><button class="on" role="tab">传输</button><button role="tab">日志</button></div>
<div class="box"><table><colgroup>${COLS.map(c => `<col style="width:${c[1]}px">`).join('')}</colgroup><thead><tr>${COLS.map(c => `<th${c[2] ? ' class="c"' : ''}>${c[0].replace('<', '&lt;').replace('->', '-&gt;')}</th>`).join('')}</tr></thead></table></div>`);

define('status-bar', `<style>
:host { display: flex; align-items: center; height: 28px; border-top: 1px solid #d4d4d4; padding: 0 23px 0 5px; }
.a { flex: 1; } .b { width: 252px; } .c { width: 82px; padding-left: 5px; border-left: 1px solid #d4d4d4; border-right: 1px solid #d4d4d4; line-height: 26px; }
</style><span class="a">已连接 192.168.126.140:22。</span><span class="b">1已选择</span><span class="c">26.33MB</span>`);

const APPS = [['tasks',22],['clock',30],['explorer',28,1],['store',30],['note',24],['bird',30,1],['chrome',28,1],['youdao2',30],['green',30,'prog'],['wpsw',30,1],['vmware',28,1],['xftp',26,'cur'],['xshell',26,1],['cmd',28,1],['rocket',30,1],['photo',30,1]];
define('task-bar', `<style>
:host { display: flex; height: 50px; background: linear-gradient(90deg, #060a1a, #0f1834 30%, #15233d 48%, #0a1638 66%, #050f30 80%, #080d1c 92%, #070b18); color: #fff; }
.start { width: 60px; } .search { display: flex; align-items: center; width: 430px; background: #f2f2f2; color: #222; padding: 0 15px 0 11px; gap: 11px; border-top: 1px solid #c9c9cf; }
.search input { flex: 1; font-size: 19px; } .search input::placeholder { color: #222; opacity: 1; }
.apps { display: grid; grid-template-columns: 64px repeat(15, 1fr); width: 970px; } .apps button { border-bottom: 3px solid transparent; margin: 0 5px; padding-top: 3px; }
.apps .run { border-color: #76b9ed; } .apps .cur { border-color: #76b9ed; background: #4c5573; margin: 0 1px; } .apps .prog { border-color: #46e02b; background: linear-gradient(90deg, #32684a 74%, #2b3554 74%); }
.tray { display: flex; align-items: center; margin-left: auto; gap: 10px; padding-right: 31px; }
.m { background: #fff; color: #111; width: 18px; height: 18px; line-height: 18px; text-align: center; font-size: 17px; margin-right: 19px; }
.bat { display: flex; align-items: center; gap: 1px; } .bat b { font-weight: 400; font-size: 13px; line-height: 18px; background: #149347; border: 2px solid #fff; padding: 0 3px; }
.clock { width: 78px; text-align: center; line-height: 24px; font-size: 16px; margin: -2px 13px 0 4px; }
</style><button class="start" aria-label="开始">${icon('win')}</button>
<div class="search">${icon('cortana', 28)}<input aria-label="搜索" placeholder="在这里输入你要搜索的内容"><button aria-label="语音">${icon('mic', 21)}</button></div>
<div class="apps">${APPS.map(a => `<button aria-label="${a[0]}" class="${a[2] === 1 ? 'run' : a[2] || ''}">${icon(a[0], a[1])}</button>`).join('')}</div>
<div class="tray"><span class="m">M</span><span class="bat">${icon('plugw', 14)}<b>100%</b></span>${icon('chevup')}${icon('cube')}${icon('battery')}${icon('monitor')}${icon('speaker')}<span>英</span><div class="clock">17:26<br>2019/9/5</div>${icon('action')}</div>`);

define('water-mark', `<style>
:host { position: absolute; right: 10px; bottom: 9px; display: grid; justify-items: end; align-items: center; font-family: "Liberation Sans", sans-serif; white-space: nowrap; pointer-events: none; }
span { grid-area: 1 / 1; } .a { font-size: 16px; color: rgba(255,255,255,.35); } .b { font-size: 19px; color: rgba(255,255,255,.65); padding-right: 6px; }
</style><span class="a">https://blog.csdn.net/caiqianyu</span><span class="b">CSDN @bb3167253066</span>`);
define('page-gauge', `<style>
:host { position: absolute; right: 0; bottom: 61px; width: 11px; height: 64px; border: 2px solid #777; border-radius: 6px; background: #e9e9e9; padding: 20px 1px 1px; }
i { display: block; height: 100%; background: #ff7d1f; border-radius: 2px; }
</style><i></i>`);

define('xftp-app', `<style>
:host { display: flex; flex-direction: column; height: 100vh; min-height: 720px; position: relative; background: #f0f0f0; overflow: hidden; }
main { flex: 1; min-height: 0; display: flex; gap: 6px; padding: 0 0 6px 1px; } .local { flex: 954; } .remote { flex: 959; }
</style><title-bar></title-bar><menu-bar></menu-bar><tool-bar></tool-bar><connect-bar></connect-bar>
<main><file-pane class="local" label="桌面"><path-bar icon="desktop" value="桌面"></path-bar><local-list></local-list></file-pane>
<file-pane class="remote" label="mongo1" active><path-bar icon="folder" value="/usr"></path-bar><remote-list></remote-list></file-pane></main>
<transfer-panel></transfer-panel><status-bar></status-bar><task-bar></task-bar><page-gauge></page-gauge><water-mark></water-mark>`);
</script>
</body>
</html>
